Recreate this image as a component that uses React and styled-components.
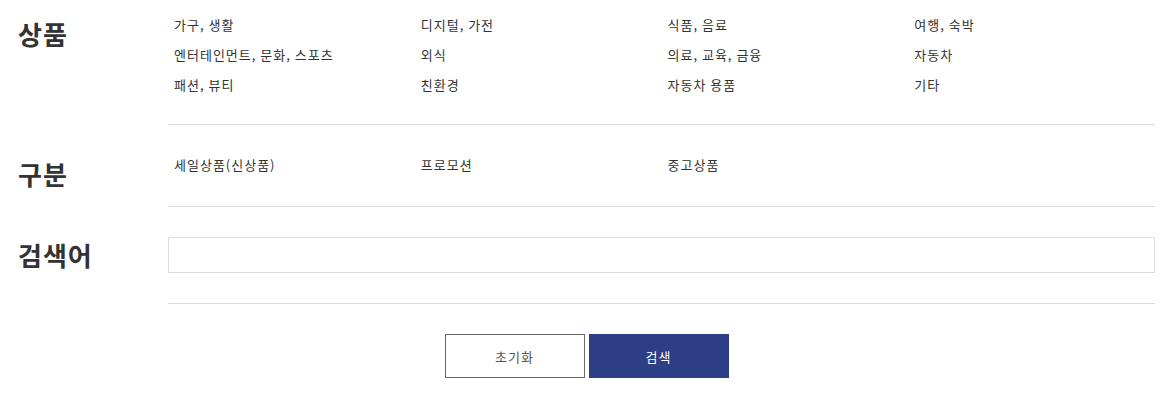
import styled, { createGlobalStyle } from "styled-components";

const GlobalStyle = createGlobalStyle`
  html, body {
    margin: 0;
    padding: 0;
    background: #fff;
    font-family: "Noto Sans CJK KR", "Noto Sans", sans-serif;
    color: #333;
  }
`;

const products = [
  "가구, 생활",
  "디지털, 가전",
  "식품, 음료",
  "여행, 숙박",
  "엔터테인먼트, 문화, 스포츠",
  "외식",
  "의료, 교육, 금융",
  "자동차",
  "패션, 뷰티",
  "친환경",
  "자동차 용품",
  "기타",
];

const kinds = ["세일상품(신상품)", "프로모션", "중고상품"];

export default function App() {
  return (
    <>
      <GlobalStyle />
      <Page>
        <Section>
          <Label $top={16}>상품</Label>
          <Body $top={10} $bottom={24}>
            <Grid>
              {products.map((p) => (
                <Item key={p}>{p}</Item>
              ))}
            </Grid>
          </Body>
        </Section>
        <Section>
          <Label $top={31}>구분</Label>
          <Body $top={25} $bottom={26}>
            <Grid>
              {kinds.map((k) => (
                <Item key={k}>{k}</Item>
              ))}
            </Grid>
          </Body>
        </Section>
        <Section>
          <Label $top={30}>검색어</Label>
          <Body $top={30} $bottom={30}>
            <Input type="text" />
          </Body>
        </Section>
        <Buttons>
          <Button>초기화</Button>
          <Button $primary>검색</Button>
        </Buttons>
      </Page>
    </>
  );
}

const Page = styled.div`
  padding: 0 18px;
`;

const Section = styled.div`
  display: grid;
  grid-template-columns: 150px 1fr;
  align-items: start;
`;

const Label = styled.div`
  padding-top: ${(p) => p.$top}px;
  font-size: 26px;
  font-weight: 700;
  line-height: 36px;
  color: #333;
  letter-spacing: 1px;
`;

const Body = styled.div`
  padding: ${(p) => p.$top}px 0 ${(p) => p.$bottom}px;
  border-bottom: 1px solid #ddd;
`;

const Grid = styled.ul`
  list-style: none;
  margin: 0;
  padding: 0;
  display: grid;
  grid-template-columns: repeat(4, 1fr);
`;

const Item = styled.li`
  padding-left: 6px;
  font-size: 13px;
  line-height: 30px;
  height: 30px;
  color: #333;
  letter-spacing: 1px;
  white-space: nowrap;
  cursor: pointer;
`;

const Input = styled.input`
  display: block;
  box-sizing: border-box;
  width: 100%;
  height: 36px;
  margin: 0;
  border: 1px solid #ddd;
  padding: 0 10px;
  font-size: 13px;
  font-family: inherit;
  outline: none;
`;

const Buttons = styled.div`
  display: flex;
  justify-content: center;
  gap: 4px;
  padding-top: 30px;
`;

const Button = styled.button`
  box-sizing: border-box;
  width: 140px;
  height: 44px;
  margin: 0;
  font-family: inherit;
  font-size: 13px;
  letter-spacing: 1px;
  cursor: pointer;
  border: 1px solid ${(p) => (p.$primary ? "#2d3e86" : "#666")};
  background: ${(p) => (p.$primary ? "#2d3e86" : "#fff")};
  color: ${(p) => (p.$primary ? "#fff" : "#555")};
`;
